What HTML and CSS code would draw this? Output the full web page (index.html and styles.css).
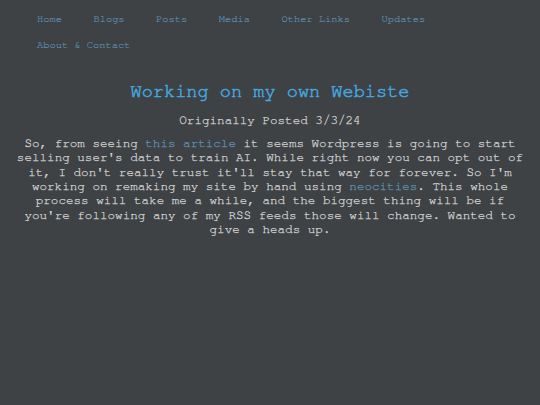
FILE: index.html
```html
<!DOCTYPE html>
<html>
<head>
<meta charset="utf-8">
<link rel="stylesheet" href="styles.css">
</head>
<body>
<nav class="nav">
  <ul class="nav-list">
    <li><a href="#">Home</a></li>
    <li><a href="#">Blogs</a></li>
    <li><a href="#">Posts</a></li>
    <li><a href="#">Media</a></li>
    <li><a href="#">Other Links</a></li>
    <li><a href="#">Updates</a></li>
    <li><a href="#">About &amp; Contact</a></li>
  </ul>
</nav>
<main class="post">
  <h1 class="post-title">Working on my own Webiste</h1>
  <p class="post-date">Originally Posted 3/3/24</p>
  <p class="post-body">So, from seeing <a href="#">this article</a> it seems Wordpress is going to start selling user's data to train AI. While right now you can opt out of it, I don't really trust it'll stay that way for forever. So I'm working on remaking my site by hand using <a href="#">neocities</a>. This whole process will take me a while, and the biggest thing will be if you're following any of my RSS feeds those will change. Wanted to give a heads up.</p>
</main>
</body>
</html>
```

FILE: styles.css
```css
html, body {
  margin: 0;
  padding: 0;
  background: #3e4244;
}
body {
  font-family: "Nimbus Mono PS", "Nimbus Mono L", "FreeMono", "Courier 10 Pitch", "Courier", "Liberation Mono", monospace;
  color: #d4d4d4;
  -webkit-text-stroke: 0.25px currentColor;
}
a {
  text-decoration: none;
}
.nav-list {
  list-style: none;
  margin: 0;
  padding: 6px 0 0 37px;
  display: flex;
  flex-wrap: wrap;
  column-gap: 31.5px;
}
.nav-list li {
  font-size: 10.4px;
  line-height: 26px;
  -webkit-text-stroke: 0.15px currentColor;
}
.nav-list a {
  color: #5e90b3;
}
.post {
  text-align: center;
}
.post-title {
  margin: 23px 0 0;
  font-size: 18.6px;
  line-height: 21.2px;
  font-weight: normal;
  color: #45a8e0;
  -webkit-text-stroke: 0.5px currentColor;
}
.post-date {
  margin: 12.2px 0 0;
  font-size: 12.6px;
  line-height: 14.3px;
}
.post-body {
  max-width: 511px;
  margin: 8.4px auto 0;
  font-size: 12.6px;
  line-height: 14.33px;
}
.post-body a {
  color: #5e93b3;
}
```
